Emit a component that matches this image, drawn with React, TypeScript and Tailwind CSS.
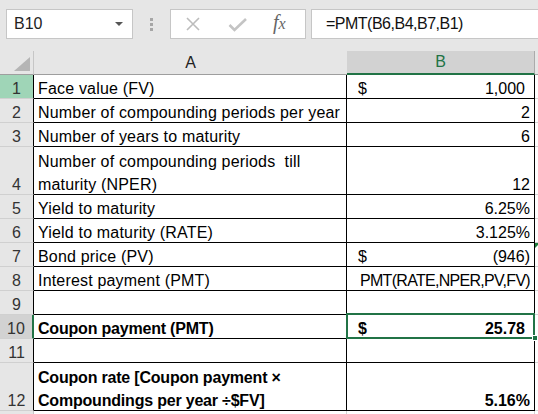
import React from 'react';

type Row = {
  n: string;
  a: string[];
  b: string;
  dollar?: boolean;
  acct?: boolean;
  bold?: boolean;
  tall?: boolean;
  selected?: boolean;
  hdr?: string;
  flag?: boolean;
  tight?: boolean;
};

const rows: Row[] = [
  { n: '1', a: ['Face value (FV)'], b: '1,000', dollar: true, acct: true, hdr: 'bg-[#9fd5b7]' },
  { n: '2', a: ['Number of compounding periods per year'], b: '2' },
  { n: '3', a: ['Number of years to maturity'], b: '6' },
  { n: '4', a: ['Number of compounding periods  till', 'maturity (NPER)'], b: '12', tall: true },
  { n: '5', a: ['Yield to maturity'], b: '6.25%' },
  { n: '6', a: ['Yield to maturity (RATE)'], b: '3.125%' },
  { n: '7', a: ['Bond price (PV)'], b: '(946)', dollar: true, flag: true },
  { n: '8', a: ['Interest payment (PMT)'], b: 'PMT(RATE,NPER,PV,FV)', tight: true },
  { n: '9', a: [], b: '' },
  { n: '10', a: ['Coupon payment (PMT)'], b: '25.78', dollar: true, acct: true, bold: true, selected: true },
  { n: '11', a: [], b: '' },
  { n: '12', a: ['Coupon rate [Coupon payment ×', 'Compoundings per year ÷$FV]'], b: '5.16%', bold: true, tall: true },
];

function FormulaBar() {
  return (
    <div className="flex items-start h-[51px] pt-[9px] pl-[6px]">
      {/* Name box */}
      <div className="w-[127px] h-[30px] bg-white border border-[#c6c6c6] flex items-center justify-between pl-[7px] pr-[9px]">
        <span className="text-[16px] leading-[18px] text-[#222]">B10</span>
        <span className="w-0 h-0 border-l-[4px] border-r-[4px] border-t-[4px] border-l-transparent border-r-transparent border-t-[#555]" />
      </div>
      {/* Grip dots */}
      <div className="w-[37px] h-[30px] flex flex-col items-center justify-center gap-[2px]">
        <span className="w-[3px] h-[3px] bg-[#a6a6a6]" />
        <span className="w-[3px] h-[3px] bg-[#a6a6a6]" />
        <span className="w-[3px] h-[3px] bg-[#a6a6a6]" />
      </div>
      {/* Cancel / enter / fx */}
      <div className="w-[136px] h-[30px] bg-white border border-[#c6c6c6] flex items-center pl-[14px]">
        <svg width="16" height="14" viewBox="0 0 16 14" className="block">
          <path d="M2 1 L14 13 M14 1 L2 13" stroke="#bcbcbc" strokeWidth="1.6" fill="none" />
        </svg>
        <svg width="20" height="15" viewBox="0 0 20 15" className="block ml-[27px]">
          <path d="M1.5 8 L6.5 13 L18 2" stroke="#c4c4c4" strokeWidth="2.6" fill="none" />
        </svg>
        <span className="ml-[25px] text-[#666] italic font-['Liberation_Serif',serif] text-[20px] leading-[20px] -mt-[2px]">
          f<span className="text-[16px]">x</span>
        </span>
      </div>
      {/* Formula box */}
      <div className="ml-[5px] flex-1 h-[30px] bg-white border border-r-0 border-[#c6c6c6] flex items-center pl-[14px]">
        <span className="text-[16px] leading-[18px] tracking-[-0.5px] text-[#111]">=PMT(B6,B4,B7,B1)</span>
      </div>
    </div>
  );
}

function HeaderRow() {
  return (
    <div className="grid grid-cols-[34px_313px_188px_1fr] h-[24px]">
      <div className="relative bg-[#e6e6e6] border-r border-r-[#c6c6c6] border-b border-b-[#9e9e9e]">
        <svg width="16" height="14" viewBox="0 0 16 14" className="absolute right-[3px] bottom-[3px]">
          <path d="M16 0 L16 14 L0 14 Z" fill="#b5b5b5" />
        </svg>
      </div>
      <div className="bg-[#e6e6e6] border-b border-b-[#9e9e9e] flex items-center justify-center">
        <span className="text-[16px] leading-[18px] text-[#222]">A</span>
      </div>
      <div className="bg-[#d2d2d2] border-b-2 border-b-[#217346] border-r border-r-[#ababab] flex items-center justify-center">
        <span className="text-[16px] leading-[18px] text-[#217346]">B</span>
      </div>
      <div className="bg-[#e6e6e6] border-b border-b-[#9e9e9e]" />
    </div>
  );
}

function BodyRow({ r }: { r: Row }) {
  const h = r.tall ? 'h-[48px]' : 'h-[24px]';
  const hdr = r.selected ? 'bg-[#d2d2d2] border-r-2 border-r-[#217346]' : `${r.hdr ?? 'bg-[#e6e6e6]'} border-r border-r-black`;
  const weight = r.bold ? 'font-bold tracking-[-0.2px]' : 'font-normal tracking-[0.18px]';
  return (
    <div className={`grid grid-cols-[34px_313px_188px_1fr] ${h}`}>
      <div className={`${hdr} border-b border-b-[#d0d0d0] flex items-end justify-center`}>
        <span className="text-[16px] leading-[18px] text-[#333]">{r.n}</span>
      </div>
      <div className={`bg-white border-r border-b border-black flex flex-col justify-end gap-[5px] pl-[4px] ${weight}`}>
        {r.a.map((line) => (
          <div key={line} className="text-[16px] leading-[18px] whitespace-pre text-black">
            {line}
          </div>
        ))}
      </div>
      <div className={`relative bg-white border-r border-b border-black flex items-end ${r.bold ? 'font-bold' : 'font-normal'}`}>
        {r.dollar && <span className="pl-[11px] text-[16px] leading-[18px] text-black">$</span>}
        <span
          className={`ml-auto text-[16px] leading-[18px] text-black ${r.acct ? 'pr-[9px]' : 'pr-[4px]'} ${r.tight ? 'tracking-[-0.7px]' : ''}`}
        >
          {r.b}
        </span>
        {r.selected && (
          <div className="absolute z-10 -left-[1px] -top-[2px] -right-[1px] -bottom-[1px] border-2 border-[#217346]">
            <span className="absolute -right-[5px] -bottom-[4px] w-[6px] h-[6px] bg-[#217346] border border-white" />
          </div>
        )}
      </div>
      <div className="relative bg-white border-b border-b-[#d4d4d4]">
        {r.flag && (
          <span className="absolute top-0 left-0 w-0 h-0 border-t-[5px] border-r-[5px] border-t-[#1e7b3c] border-r-transparent" />
        )}
      </div>
    </div>
  );
}

export default function App() {
  return (
    <div className="w-[538px] h-[414px] overflow-hidden bg-[#e6e6e6] font-['Liberation_Sans',Arial,sans-serif]">
      <FormulaBar />
      <HeaderRow />
      {rows.map((r) => (
        <BodyRow key={r.n} r={r} />
      ))}
      <div className="grid grid-cols-[34px_313px_188px_1fr] h-[24px]">
        <div className="bg-[#e6e6e6] border-r border-r-[#c6c6c6]" />
        <div className="bg-white border-r border-r-[#d4d4d4]" />
        <div className="bg-white border-r border-r-[#d4d4d4]" />
        <div className="bg-white" />
      </div>
    </div>
  );
}
